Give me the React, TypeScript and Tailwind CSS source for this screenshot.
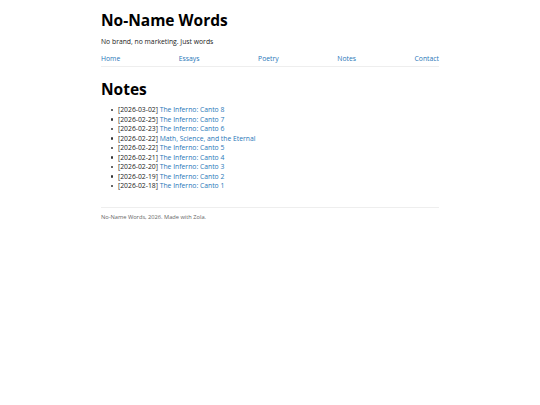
import React from 'react';

const notes = [
    { date: '2026-03-02', title: 'The Inferno: Canto 8' },
    { date: '2026-02-25', title: 'The Inferno: Canto 7' },
    { date: '2026-02-23', title: 'The Inferno: Canto 6' },
    { date: '2026-02-22', title: 'Math, Science, and the Eternal' },
    { date: '2026-02-22', title: 'The Inferno: Canto 5' },
    { date: '2026-02-21', title: 'The Inferno: Canto 4' },
    { date: '2026-02-20', title: 'The Inferno: Canto 3' },
    { date: '2026-02-19', title: 'The Inferno: Canto 2' },
    { date: '2026-02-18', title: 'The Inferno: Canto 1' },
];

const navItems = ['Home', 'Essays', 'Poetry', 'Notes', 'Contact'];

export default function App() {
    return (
        <div className="min-h-screen bg-white text-[#222] font-['Open_Sans',sans-serif]">
            <div className="w-[338px] mx-auto pt-[10px]">
                <header>
                    <h1 className="text-[15.5px] font-bold leading-[20px] text-black">No-Name Words</h1>
                    <p className="text-[6.8px] mt-[7px] leading-[10px]">No brand, no marketing. Just words</p>
                    <nav className="flex justify-between mt-[7px] pb-[2px] border-b border-[#eee] text-[6.8px] leading-[10px]">
                        {navItems.map((item) => (
                            <a key={item} href="#" className="text-[#2877b8]">
                                {item}
                            </a>
                        ))}
                    </nav>
                </header>

                <main>
                    <h2 className="text-[15.5px] font-bold leading-[20px] mt-[12px] text-black">Notes</h2>
                    <ul className="mt-[6px] text-[6.8px] leading-[9.5px]">
                        {notes.map((n, i) => (
                            <li key={i} className="flex items-center">
                                {/* bullet */}
                                <span className="w-[17px] flex justify-end pr-[5px]">
                                    <span className="w-[2.5px] h-[2.5px] rounded-full bg-[#333]" />
                                </span>
                                <span>
                                    [{n.date}]{' '}
                                    <a href="#" className="text-[#2877b8]">
                                        {n.title}
                                    </a>
                                </span>
                            </li>
                        ))}
                    </ul>
                </main>

                <footer className="mt-[16px] pt-[5px] border-t border-[#eee] text-[5.7px] leading-[8px] text-[#666]">
                    No-Name Words, 2026. Made with Zola.
                </footer>
            </div>
        </div>
    );
}
